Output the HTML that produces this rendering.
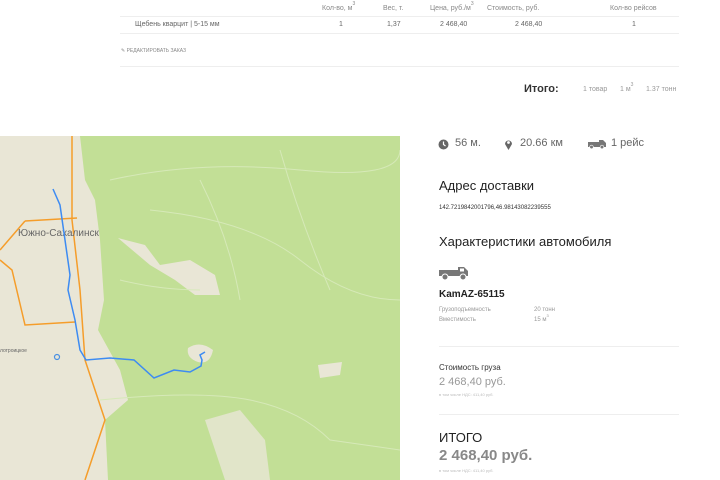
<!DOCTYPE html>
<html><head><meta charset="utf-8"><style>
body{margin:0;width:720px;height:480px;overflow:hidden;background:#fff;font-family:"Liberation Sans","DejaVu Sans",sans-serif;color:#333;position:relative}
.a{position:absolute;white-space:nowrap;line-height:1.2}
sup{line-height:0;vertical-align:top;position:relative;top:-1px}
.th{font-size:7px;color:#888;top:5px}
.td{font-size:7px;color:#666;top:21px}
</style></head><body>
<div class="a th" style="left:322px">Кол-во, м<sup style="font-size:5px">3</sup></div>
<div class="a th" style="left:383px">Вес, т.</div>
<div class="a th" style="left:430px">Цена, руб./м<sup style="font-size:5px">3</sup></div>
<div class="a th" style="left:487px">Стоимость, руб.</div>
<div class="a th" style="left:610px">Кол-во рейсов</div>
<div class="a" style="left:120px;top:16px;width:559px;height:16px;border:1px solid #eee;border-width:1px 0"></div>
<div class="a td" style="left:135px">Щебень кварцит | 5-15 мм</div>
<div class="a td" style="left:339px">1</div>
<div class="a td" style="left:387px">1,37</div>
<div class="a td" style="left:440px">2 468,40</div>
<div class="a td" style="left:515px">2 468,40</div>
<div class="a td" style="left:632px">1</div>
<div class="a" style="left:121px;top:48px;font-size:5px;color:#888">✎ РЕДАКТИРОВАТЬ ЗАКАЗ</div>
<div class="a" style="left:120px;top:66px;width:559px;height:1px;background:#eee"></div>
<div class="a" style="left:524px;top:83px;font-size:11px;font-weight:bold;color:#333">Итого:</div>
<div class="a" style="left:583px;top:86px;font-size:7px;color:#999">1 товар</div>
<div class="a" style="left:620px;top:86px;font-size:7px;color:#999">1 м<sup style="font-size:5px">3</sup></div>
<div class="a" style="left:646px;top:86px;font-size:7px;color:#999">1.37 тонн</div>

<svg class="a" style="left:0;top:136px" width="400" height="344" viewBox="0 136 400 344">
<rect x="0" y="136" width="400" height="344" fill="#c2df96"/>
<path d="M0 136 H80 L85 180 L95 200 L100 240 L104 300 L98 330 L120 370 L128 400 L105 420 L108 480 H0Z" fill="#e9e6d6"/>
<path d="M118 238 L145 245 L160 265 L190 260 L215 275 L220 295 L195 295 L175 280 L150 265 Z" fill="#e9e6d6"/>
<path d="M188 348 Q200 340 213 350 Q210 365 198 362 Q186 358 188 348Z" fill="#e9e6d6"/>
<path d="M205 420 L240 410 L265 440 L270 480 H225 L215 450Z" fill="#e9e6d6" opacity=".8"/>
<path d="M318 365 L342 362 L340 375 L320 378Z" fill="#e9e6d6"/>
<g fill="none" stroke="#d6e9b8" stroke-width="1">
<path d="M110 180 Q200 160 300 170 T400 150"/><path d="M150 210 Q250 220 300 260 T400 300"/><path d="M100 400 Q200 390 250 400 T330 440 L400 450"/><path d="M200 180 Q230 240 240 300"/><path d="M280 150 Q300 220 330 290"/><path d="M120 280 Q160 290 200 290"/>
</g>
<g fill="none" stroke="#f59d2a" stroke-width="1.5">
<path d="M72 136 L72 220 L80 290 L85 360 L105 420 L95 450 L85 480"/>
<path d="M25 221 L77 218"/><path d="M0 250 L25 221"/><path d="M0 260 L12 270 L25 325 L75 322"/>
</g>
<text x="18" y="236" font-size="10" fill="#666">Южно-Сахалинск</text>
<text x="0" y="352" font-size="5" fill="#666">лотроицкое</text>
<circle cx="57" cy="357" r="2.5" fill="none" stroke="#4a90e2" stroke-width="1.2"/>
<path d="M53 189 L60 205 L70 275 L68 290 L75 320 L80 350 L86 360 L110 358 L134 360 L154 378 L174 370 L190 372 L201 366 L202 360 L200 355 L205 352" fill="none" stroke="#3d8bf2" stroke-width="1.5"/>
</svg>

<svg class="a" style="left:438px;top:139px" width="11" height="11"><circle cx="5.5" cy="5.5" r="5" fill="#666"/><path d="M5.5 2.5V5.5L7.5 7" stroke="#fff" stroke-width="1.2" fill="none"/></svg>
<div class="a" style="left:455px;top:137px;font-size:11px;color:#666">56 м.</div>
<svg class="a" style="left:504px;top:138px" width="9" height="12"><path d="M4.5 12 L1 6 A3.5 3.5 0 1 1 8 6Z" fill="#666"/><circle cx="4.5" cy="4.5" r="1.4" fill="#fff"/></svg>
<div class="a" style="left:520px;top:137px;font-size:11px;color:#666">20.66 км</div>
<svg class="a" style="left:588px;top:140px" width="18" height="9"><rect x="0" y="2" width="11" height="5" fill="#777"/><path d="M11 0 H15 L18 3 V7 H11Z" fill="#777"/><circle cx="3.5" cy="7" r="1.8" fill="#777" stroke="#fff" stroke-width=".6"/><circle cx="14" cy="7" r="1.8" fill="#777" stroke="#fff" stroke-width=".6"/></svg>
<div class="a" style="left:611px;top:137px;font-size:11px;color:#666">1 рейс</div>
<div class="a" style="left:439px;top:178px;font-size:13px;color:#222">Адрес доставки</div>
<div class="a" style="left:439px;top:205px;font-size:6px;color:#333">142.7219842001796,46.98143082239555</div>
<div class="a" style="left:439px;top:234px;font-size:13px;color:#222">Характеристики автомобиля</div>
<svg class="a" style="left:439px;top:265px" width="30" height="16"><rect x="0" y="5" width="19" height="6" fill="#777"/><path d="M19 2 H25 L29 6 V11 H19Z" fill="#777"/><rect x="21" y="3.5" width="4" height="3" fill="#fff"/><circle cx="6" cy="12" r="3" fill="#777" stroke="#fff"/><circle cx="24" cy="12" r="3" fill="#777" stroke="#fff"/></svg>
<div class="a" style="left:439px;top:289px;font-size:10px;font-weight:bold;color:#222">KamAZ-65115</div>
<div class="a" style="left:439px;top:307px;font-size:6px;color:#999">Грузоподъемность</div>
<div class="a" style="left:534px;top:307px;font-size:6px;color:#999">20 тонн</div>
<div class="a" style="left:439px;top:317px;font-size:6px;color:#999">Вместимость</div>
<div class="a" style="left:534px;top:317px;font-size:6px;color:#999">15 м<sup style="font-size:4px">3</sup></div>
<div class="a" style="left:439px;top:346px;width:240px;height:1px;background:#eee"></div>
<div class="a" style="left:439px;top:363px;font-size:8px;color:#333">Стоимость груза</div>
<div class="a" style="left:439px;top:376px;font-size:11px;color:#999">2 468,40 руб.</div>
<div class="a" style="left:439px;top:393px;font-size:4px;color:#bbb">в том числе НДС: 411,40 руб.</div>
<div class="a" style="left:439px;top:414px;width:240px;height:1px;background:#eee"></div>
<div class="a" style="left:439px;top:430px;font-size:13px;color:#222">ИТОГО</div>
<div class="a" style="left:439px;top:447px;font-size:15px;font-weight:bold;color:#888">2 468,40 руб.</div>
<div class="a" style="left:439px;top:469px;font-size:4px;color:#bbb">в том числе НДС: 411,40 руб.</div>
</body></html>
